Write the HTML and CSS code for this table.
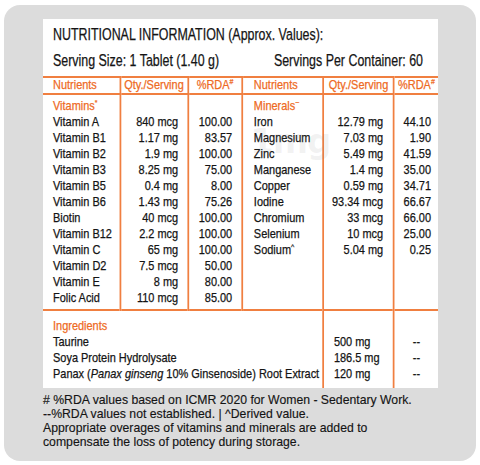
FILE: index.html
```html
<!DOCTYPE html>
<html>
<head>
<meta charset="utf-8">
<link rel="stylesheet" href="styles.css">
</head>
<body>
<div class="card">
  <div class="panel">
    <div class="title"><span class="cond">NUTRITIONAL INFORMATION (Approx. Values):</span></div>
    <div class="serving">
      <div class="cond serving-row">
        <span>Serving Size: 1 Tablet (1.40 g)</span>
        <span>Servings Per Container: 60</span>
      </div>
    </div>
    <table class="nt">
      <colgroup>
        <col class="c1"><col class="c2"><col class="c3"><col class="c4"><col class="c5"><col class="c6">
      </colgroup>
      <thead>
        <tr>
          <th class="l">Nutrients</th>
          <th>Qty./Serving</th>
          <th>%RDA<sup>#</sup></th>
          <th class="l r">Nutrients</th>
          <th>Qty./Serving</th>
          <th>%RDA<sup>#</sup></th>
        </tr>
      </thead>
      <tbody class="main">
        <tr class="first"><td class="n sec">Vitamins<sup>*</sup></td><td></td><td></td><td class="n2 sec">Minerals<sup>~</sup></td><td></td><td></td></tr>
        <tr><td class="n">Vitamin A</td><td class="q">840 mcg</td><td class="p">100.00</td><td class="n2">Iron</td><td class="q2">12.79 mg</td><td class="p2">44.10</td></tr>
        <tr><td class="n">Vitamin B1</td><td class="q">1.17 mg</td><td class="p">83.57</td><td class="n2">Magnesium</td><td class="q2">7.03 mg</td><td class="p2">1.90</td></tr>
        <tr><td class="n">Vitamin B2</td><td class="q">1.9 mg</td><td class="p">100.00</td><td class="n2">Zinc</td><td class="q2">5.49 mg</td><td class="p2">41.59</td></tr>
        <tr><td class="n">Vitamin B3</td><td class="q">8.25 mg</td><td class="p">75.00</td><td class="n2">Manganese</td><td class="q2">1.4 mg</td><td class="p2">35.00</td></tr>
        <tr><td class="n">Vitamin B5</td><td class="q">0.4 mg</td><td class="p">8.00</td><td class="n2">Copper</td><td class="q2">0.59 mg</td><td class="p2">34.71</td></tr>
        <tr><td class="n">Vitamin B6</td><td class="q">1.43 mg</td><td class="p">75.26</td><td class="n2">Iodine</td><td class="q2">93.34 mcg</td><td class="p2">66.67</td></tr>
        <tr><td class="n">Biotin</td><td class="q">40 mcg</td><td class="p">100.00</td><td class="n2">Chromium</td><td class="q2">33 mcg</td><td class="p2">66.00</td></tr>
        <tr><td class="n">Vitamin B12</td><td class="q">2.2 mcg</td><td class="p">100.00</td><td class="n2">Selenium</td><td class="q2">10 mcg</td><td class="p2">25.00</td></tr>
        <tr><td class="n">Vitamin C</td><td class="q">65 mg</td><td class="p">100.00</td><td class="n2">Sodium<sup>^</sup></td><td class="q2">5.04 mg</td><td class="p2">0.25</td></tr>
        <tr><td class="n">Vitamin D2</td><td class="q">7.5 mcg</td><td class="p">50.00</td><td></td><td></td><td></td></tr>
        <tr><td class="n">Vitamin E</td><td class="q">8 mg</td><td class="p">80.00</td><td></td><td></td><td></td></tr>
        <tr class="last"><td class="n">Folic Acid</td><td class="q">110 mcg</td><td class="p">85.00</td><td></td><td></td><td></td></tr>
      </tbody>
      <tbody class="ing">
        <tr class="first"><td colspan="4" class="n sec">Ingredients</td><td></td><td></td></tr>
        <tr><td colspan="4" class="n">Taurine</td><td class="iq">500 mg</td><td class="dash">--</td></tr>
        <tr><td colspan="4" class="n">Soya Protein Hydrolysate</td><td class="iq">186.5 mg</td><td class="dash">--</td></tr>
        <tr class="last"><td colspan="4" class="n">Panax (<i>Panax ginseng</i> 10% Ginsenoside) Root Extract</td><td class="iq">120 mg</td><td class="dash">--</td></tr>
      </tbody>
    </table>
    <div class="wm">1mg</div>
  </div>
  <div class="notes">
    <p># %RDA values based on ICMR 2020 for Women - Sedentary Work.</p>
    <p>--%RDA values not established. | ^Derived value.</p>
    <p>Appropriate overages of vitamins and minerals are added to</p>
    <p>compensate the loss of potency during storage.</p>
  </div>
</div>
</body>
</html>
```

FILE: styles.css
```css
html, body {
  margin: 0;
  padding: 0;
  background: #ffffff;
}
body {
  padding: 5px 4px 0 4px;
  font-family: "Liberation Sans", Arial, sans-serif;
  color: #141414;
}
.card {
  width: 472px;
  height: 456px;
  box-sizing: border-box;
  background: #dcdcdc;
  border-radius: 16px;
  padding: 14px 0 0 39px;
  overflow: hidden;
}
.panel {
  position: relative;
  width: 395px;
  height: 369px;
  background: #ffffff;
  overflow: hidden;
  -webkit-text-stroke: 0.25px currentColor;
}
.cond {
  display: inline-block;
  transform: scaleX(0.74);
  transform-origin: left center;
  white-space: nowrap;
}
.title {
  font-size: 16.8px;
  line-height: 20px;
  padding: 6px 0 0 10px;
  white-space: nowrap;
}
.serving {
  font-size: 16.8px;
  line-height: 20px;
  height: 20px;
  padding: 6px 0 0 10px;
  white-space: nowrap;
}
.serving-row {
  display: flex;
  justify-content: space-between;
  width: 500px;
}
.nt {
  margin-top: 5px;
  border-collapse: collapse;
  table-layout: fixed;
  width: 454px;
  font-size: 12.6px;
  transform: scaleX(0.87);
  transform-origin: left top;
}
.c1 { width: 88.5px; }
.c2 { width: 78.2px; }
.c3 { width: 62.1px; }
.c4 { width: 93.1px; }
.c5 { width: 81.6px; }
.c6 { width: 50.5px; }
.nt th {
  color: #ee6a24;
  font-weight: normal;
  height: 15px;
  line-height: 15px;
  padding: 0;
  text-align: center;
  border-top: 2px solid #f07f40;
  border-bottom: 2px solid #f07f40;
  border-left: 2px solid #f07f40;
  white-space: nowrap;
}
.nt th.l { text-align: left; padding-left: 11.5px; }
.nt th:first-child { border-left: none; }
.nt th.r { padding-left: 12.6px; }
.nt sup {
  font-size: 8px;
  line-height: 0;
  vertical-align: 5px;
}
.nt td {
  padding: 0;
  height: 16px;
  line-height: 16px;
  white-space: nowrap;
  border-left: 2px solid #f07f40;
}
.nt td:first-child { border-left: none; }
.nt tr.first td { padding-top: 3px; }
.main tr.last td { padding-bottom: 3px; }
.ing tr.first td { padding-top: 7px; }
.ing tr.last td { padding-bottom: 9px; }
.ing { border-top: 2px solid #f07f40; }
.sec { color: #ee6a24; }
.nt td.n { padding-left: 11.5px; }
.nt td.n2 { padding-left: 12.6px; }
.nt td.q, .nt td.p { text-align: right; padding-right: 10.3px; }
.nt td.q2 { text-align: right; padding-right: 11.5px; }
.nt td.p2 { text-align: right; padding-right: 8px; }
.nt td.iq { padding-left: 11.5px; }
.nt td.dash { text-align: center; }
.wm {
  position: absolute;
  left: 207px;
  top: 102px;
  font-family: "DejaVu Sans", sans-serif;
  font-weight: bold;
  font-size: 34px;
  letter-spacing: -1px;
  color: rgba(120, 120, 120, 0.1);
  -webkit-text-stroke: 0;
  pointer-events: none;
}
.notes {
  padding-top: 5px;
  font-size: 13.3px;
  line-height: 14px;
  color: #141414;
  transform: scaleX(0.92);
  transform-origin: left top;
  white-space: nowrap;
  -webkit-text-stroke: 0.15px currentColor;
}
.notes p { margin: 0; }
```
